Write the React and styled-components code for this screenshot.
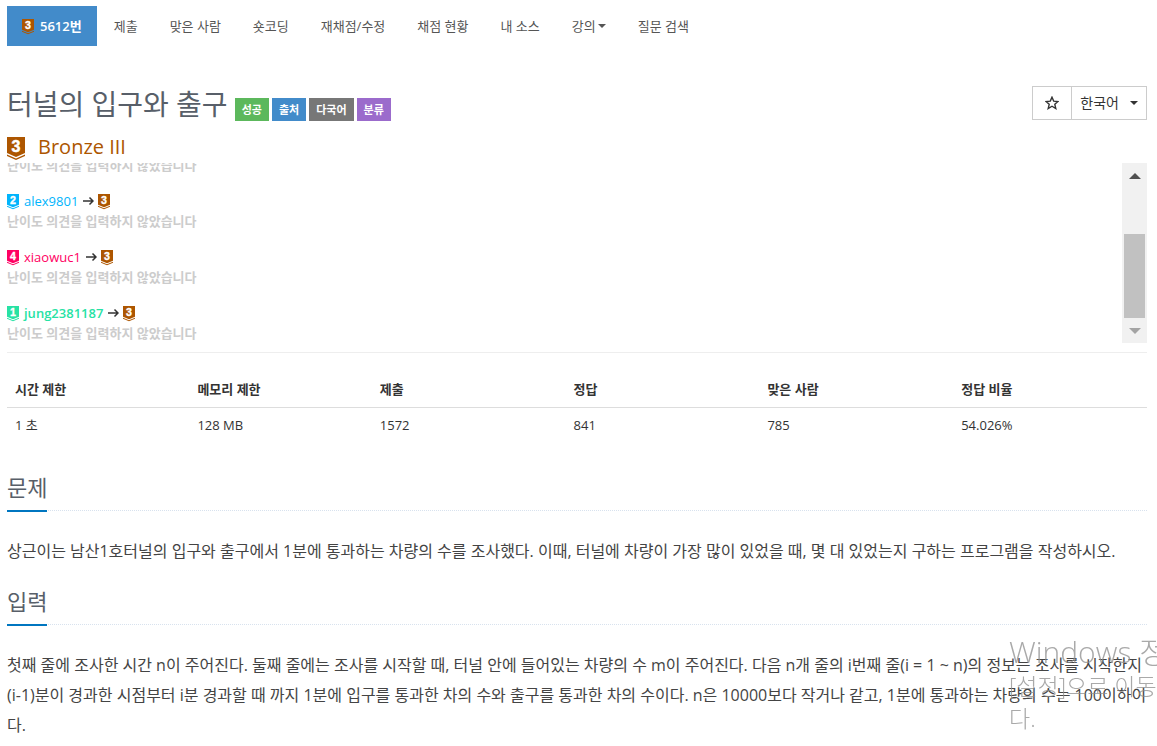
import React from 'react';
import styled, { createGlobalStyle } from 'styled-components';

const GlobalStyle = createGlobalStyle`
  * {
    box-sizing: border-box;
  }

  body {
    margin: 0;
    background: #fff;
    color: #333;
    font-family: 'Open Sans', 'Noto Sans CJK KR', sans-serif;
    font-size: 13px;
    line-height: 20px;
    overflow: hidden;
  }
`;

const Page = styled.main`
  padding: 6px 10px 0 7px;
`;

const Nav = styled.nav`
  display: flex;
  gap: 2px;
`;

const NavLink = styled.a`
  display: flex;
  align-items: center;
  padding: 10px 15px;
  text-decoration: none;
  white-space: nowrap;
  color: ${props => (props.$active ? '#fff' : '#555')};
  background: ${props => (props.$active ? '#428bca' : 'transparent')};
  font-weight: ${props => (props.$active ? 600 : 400)};

  svg {
    margin-right: 6px;
  }
`;

const Caret = styled.span`
  border: 4px solid transparent;
  border-top-color: currentColor;
  border-bottom: 0;
  margin-left: ${props => props.$gap || '2px'};
`;

const Header = styled.header`
  display: flex;
  justify-content: space-between;
  align-items: flex-start;
  margin-top: 38px;
`;

const TitleRow = styled.div`
  display: flex;
  align-items: flex-end;
  gap: 7px;
`;

const Title = styled.h1`
  margin: 0;
  font-size: 28px;
  line-height: 40px;
  font-weight: 400;
  color: #585f69;
`;

const Labels = styled.div`
  display: flex;
  gap: 3px;
  padding-bottom: 3px;
`;

const Label = styled.span`
  padding: 2px 7px 1px;
  background: ${props => props.$color};
  color: #fff;
  font-size: 11px;
  font-weight: 700;
`;

const ButtonGroup = styled.div`
  display: flex;
  margin-top: 2px;
`;

const Button = styled.button`
  display: flex;
  align-items: center;
  justify-content: center;
  height: 34px;
  min-width: 40px;
  padding: 0 8px;
  border: 1px solid #ccc;
  background: #fff;
  color: #333;
  font: inherit;
  font-size: 14px;

  & + & {
    margin-left: -1px;
  }
`;

const Tier = styled.div`
  display: flex;
  align-items: center;
  gap: 13px;
  margin-top: 8px;
  padding-bottom: 1px;
  height: 31px;
  font-size: 20px;
  color: #ad5600;
`;

const OpinionBox = styled.section`
  display: flex;
  height: 180px;
`;

// column-reverse keeps the list scrolled to its last entry
const OpinionScroll = styled.div`
  flex: 1;
  display: flex;
  flex-direction: column-reverse;
  overflow-y: auto;
  scrollbar-width: none;
`;

const OpinionList = styled.ul`
  margin: 0;
  padding: 0;
  list-style: none;
  display: grid;
  gap: 16px;
`;

const Voter = styled.div`
  display: flex;
  align-items: center;
  height: 20px;
`;

const VoterName = styled.a`
  margin: 0 5px;
  color: ${props => props.$color};
  font-weight: ${props => (props.$bold ? 600 : 400)};
  text-decoration: none;
`;

const Arrow = styled.svg`
  margin-right: 4px;
`;

const Comment = styled.div`
  height: 20px;
  color: #ccc;
  font-weight: 700;
`;

const ScrollTrack = styled.div`
  display: flex;
  flex-direction: column;
  align-items: center;
  width: 25px;
  background: #f1f1f1;
`;

const ScrollButton = styled.button`
  width: 25px;
  height: 25px;
  padding: 0;
  border: 0;
  background: none;
  color: ${props => props.$color};

  svg {
    display: block;
    margin: auto;
  }
`;

const ScrollRail = styled.div`
  flex: 1;
  display: flex;
  flex-direction: column;
  justify-content: flex-end;
`;

const ScrollThumb = styled.div`
  width: 21px;
  height: 65%;
  background: #c1c1c1;
`;

const Divider = styled.hr`
  margin: 9px 0 19px;
  border: 0;
  border-top: 1px solid #eee;
`;

const InfoTable = styled.table`
  width: 100%;
  table-layout: fixed;
  border-collapse: collapse;

  th,
  td {
    padding: 8px;
    line-height: 19px;
    text-align: left;
  }

  th {
    width: 17%;
    border-bottom: 1px solid #ddd;
  }

  th:nth-child(-n + 2) {
    width: 16%;
  }
`;

const Section = styled.section`
  margin-top: ${props => props.$top};
`;

const SectionHead = styled.div`
  display: flex;
  border-bottom: 1px dotted #d8e2ee;
`;

const SectionTitle = styled.h2`
  margin: 0 0 -2px;
  padding-bottom: 6px;
  border-bottom: 2px solid #0076c0;
  color: #585f69;
  font-size: 22px;
  line-height: 33px;
  font-weight: 400;
`;

const Paragraph = styled.p`
  margin: 25px 0 0;
  font-size: 16px;
  line-height: 30px;
  color: #444;
`;

const Watermark = styled.aside`
  position: fixed;
  right: 0;
  bottom: 12px;
  width: 148px;
  overflow: hidden;
  white-space: nowrap;
  pointer-events: none;
  color: rgba(140, 140, 140, 0.75);
  font-weight: 300;
  font-size: 23px;
  line-height: 32px;

  strong {
    display: block;
    font-weight: 300;
    font-size: 30px;
    line-height: 36px;
  }
`;

const BadgeIcon = styled.svg`
  flex: none;
  margin-top: 2px;
`;

const TierBadge = ({ level, color, width = 12 }) => (
  <BadgeIcon width={width} height={(width * 46) / 36} viewBox="0 0 36 46" aria-hidden="true">
    <path d="M0 0H36V32L18 40L0 32Z" fill={color} />
    <path d="M0 35L18 43L36 35V38L18 46L0 38Z" fill={color} />
    <text
      x="18"
      y="29"
      textAnchor="middle"
      fill="#fff"
      stroke="#fff"
      strokeWidth="1"
      fontFamily="'Liberation Sans', sans-serif"
      fontSize="32"
      fontWeight="700"
    >
      {level}
    </text>
  </BadgeIcon>
);

const BRONZE = '#ad5600';

const navItems = ['제출', '맞은 사람', '숏코딩', '재채점/수정', '채점 현황', '내 소스', '강의', '질문 검색'];

const labels = [
  { text: '성공', color: '#5cb85c' },
  { text: '출처', color: '#428bca' },
  { text: '다국어', color: '#777' },
  { text: '분류', color: '#9b6bcc' },
];

const opinions = [
  {},
  { name: 'alex9801', level: 2, color: '#00b4fc' },
  { name: 'xiaowuc1', level: 4, color: '#ff0062' },
  { name: 'jung2381187', level: 1, color: '#27e2a4', bold: true },
];

const info = [
  ['시간 제한', '1 초'],
  ['메모리 제한', '128 MB'],
  ['제출', '1572'],
  ['정답', '841'],
  ['맞은 사람', '785'],
  ['정답 비율', '54.026%'],
];

const Opinion = ({ name, level, color, bold }) => (
  <li>
    {name && (
      <Voter>
        <TierBadge level={level} color={color} />
        <VoterName href="#" $color={color} $bold={bold}>{name}</VoterName>
        <Arrow width="11" height="10" viewBox="0 0 11 10" fill="none" stroke="#333" strokeWidth="1.5">
          <path d="M0 5H10M6.5 1.5L10 5L6.5 8.5" />
        </Arrow>
        <TierBadge level={3} color={BRONZE} />
      </Voter>
    )}
    <Comment>난이도 의견을 입력하지 않았습니다</Comment>
  </li>
);

const App = () => (
  <>
    <GlobalStyle />
    <Page>
      <Nav>
        <NavLink href="#" $active>
          <TierBadge level={3} color={BRONZE} />
          5612번
        </NavLink>
        {navItems.map(item => (
          <NavLink href="#" key={item}>
            {item}
            {item === '강의' && <Caret />}
          </NavLink>
        ))}
      </Nav>

      <Header>
        <TitleRow>
          <Title>터널의 입구와 출구</Title>
          <Labels>
            {labels.map(label => (
              <Label key={label.text} $color={label.color}>{label.text}</Label>
            ))}
          </Labels>
        </TitleRow>
        <ButtonGroup>
          <Button type="button" aria-label="즐겨찾기">
            <svg width="14" height="14" viewBox="0 0 14 14" fill="none" stroke="#333" strokeWidth="1.4">
              <path d="M7 1.2L8.7 5.1L13 5.5L9.8 8.3L10.8 12.5L7 10.2L3.2 12.5L4.2 8.3L1 5.5L5.3 5.1Z" />
            </svg>
          </Button>
          <Button type="button">
            한국어
            <Caret $gap="11px" />
          </Button>
        </ButtonGroup>
      </Header>

      <Tier>
        <TierBadge level={3} color={BRONZE} width={18} />
        Bronze III
      </Tier>

      <OpinionBox>
        <OpinionScroll>
          <OpinionList>
            {opinions.map((opinion, index) => (
              <Opinion key={index} {...opinion} />
            ))}
          </OpinionList>
        </OpinionScroll>
        <ScrollTrack>
          <ScrollButton type="button" aria-label="위로" $color="#505050">
            <svg width="12" height="6" viewBox="0 0 12 6"><path d="M0 6L6 0L12 6Z" fill="currentColor" /></svg>
          </ScrollButton>
          <ScrollRail>
            <ScrollThumb />
          </ScrollRail>
          <ScrollButton type="button" aria-label="아래로" $color="#a3a3a3">
            <svg width="12" height="6" viewBox="0 0 12 6"><path d="M0 0L6 6L12 0Z" fill="currentColor" /></svg>
          </ScrollButton>
        </ScrollTrack>
      </OpinionBox>

      <Divider />

      <InfoTable>
        <thead>
          <tr>
            {info.map(([head]) => <th key={head}>{head}</th>)}
          </tr>
        </thead>
        <tbody>
          <tr>
            {info.map(([head, value]) => <td key={head}>{value}</td>)}
          </tr>
        </tbody>
      </InfoTable>

      <Section $top="28px">
        <SectionHead>
          <SectionTitle>문제</SectionTitle>
        </SectionHead>
        <Paragraph>
          상근이는 남산1호터널의 입구와 출구에서 1분에 통과하는 차량의 수를 조사했다. 이때, 터널에 차량이 가장 많이 있었을 때, 몇 대 있었는지 구하는 프로그램을 작성하시오.
        </Paragraph>
      </Section>

      <Section $top="19px">
        <SectionHead>
          <SectionTitle>입력</SectionTitle>
        </SectionHead>
        <Paragraph>
          첫째 줄에 조사한 시간 n이 주어진다. 둘째 줄에는 조사를 시작할 때, 터널 안에 들어있는 차량의 수 m이 주어진다. 다음 n개 줄의 i번째 줄(i = 1 ~ n)의 정보는 조사를 시작한지 (i-1)분이 경과한 시점부터 i분 경과할 때 까지 1분에 입구를 통과한 차의 수와 출구를 통과한 차의 수이다. n은 10000보다 작거나 같고, 1분에 통과하는 차량의 수는 100이하이다.
        </Paragraph>
      </Section>
    </Page>
    <Watermark>
      <strong>Windows 정</strong>
      [설정]으로 이동
      <br />
      다.
    </Watermark>
  </>
);

export default App;
